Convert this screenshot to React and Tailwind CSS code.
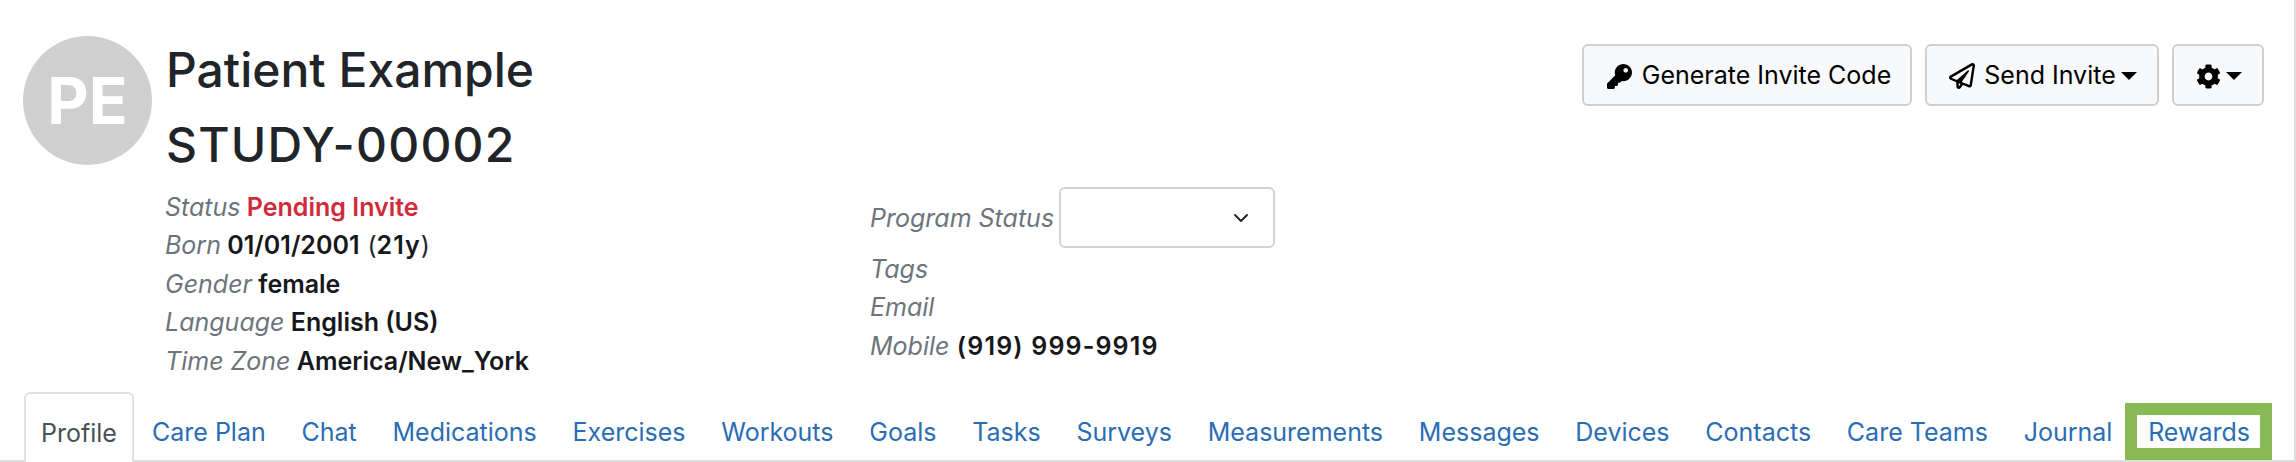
import React from 'react';
import { FaKey, FaRegPaperPlane, FaCog } from 'react-icons/fa';
import { ChevronDown } from 'lucide-react';

const TABS = ['Care Plan', 'Chat', 'Medications', 'Exercises', 'Workouts', 'Goals', 'Tasks', 'Surveys', 'Measurements', 'Messages', 'Devices', 'Contacts', 'Care Teams', 'Journal'];

const Caret = () => (
  <span className="ml-[5px] inline-block border-x-[8px] border-t-[8px] border-x-transparent border-t-black" />
);

const Field = ({ label, children }) => (
  <div className="flex h-[38.6px] items-center whitespace-pre">
    <i className="text-[#6c757d]">{label}</i>
    {children}
  </div>
);

const Value = ({ children }) => <b className="font-semibold text-[#16181b]"> {children}</b>;

const InviteButton = ({ children }) => (
  <button className="flex h-[62px] items-center rounded-[6px] border-2 border-[#cfcfcf] bg-[#f8f9fa] pt-[2px] text-black">
    {children}
  </button>
);

export default function App() {
  return (
    <div className="flex h-[462px] w-[2296px] flex-col overflow-hidden border-r-2 border-[#dedede] bg-white font-['Inter',sans-serif] text-[25px] text-[#212529]">
      {/* header */}
      <div className="flex justify-between pl-[23px] pr-[30px] pt-[36px]">
        <div className="flex">
          <div className="flex h-[129px] w-[129px] items-center justify-center rounded-full bg-[#d0d0d0] text-[64px] font-bold text-white">PE</div>
          <div className="ml-[14px] -mt-[4px] text-[48px] font-medium leading-[75px]">
            <div>Patient Example</div>
            <div className="tracking-[1.2px]">STUDY-00002</div>
          </div>
        </div>
        <div className="mt-[8px] flex gap-[13px] self-start">
          <InviteButton>
            <span className="flex w-[326px] items-center justify-center gap-[10px] pl-[4px]"><FaKey className="text-[25px]" /> Generate Invite Code</span>
          </InviteButton>
          <InviteButton>
            <span className="flex w-[230px] items-center justify-center gap-[9px] pl-[2px]">
              <FaRegPaperPlane className="text-[26px]" />
              <span className="flex items-center">Send Invite<Caret /></span>
            </span>
          </InviteButton>
          <InviteButton>
            <span className="ml-[2px] flex w-[86px] items-center justify-center"><FaCog className="text-[25px]" /><Caret /></span>
          </InviteButton>
        </div>
      </div>

      {/* patient details */}
      <div className="mt-[6px] flex pl-[165px]">
        <div className="w-[705px]">
          <Field label="Status"><b className="font-semibold text-[#d02b3a]"> Pending Invite</b></Field>
          <Field label="Born">
            <Value>01/01/2001</Value>
            <span className="ml-[8px]">(<b className="font-semibold tracking-[1px] text-[#16181b]">21y</b>)</span>
          </Field>
          <Field label="Gender"><Value>female</Value></Field>
          <Field label="Language"><Value>English (US)</Value></Field>
          <Field label="Time Zone"><Value>America/New_York</Value></Field>
        </div>
        <div className="-mt-[1px]">
          <div className="flex h-[61px] items-center">
            <i className="w-[189px] pt-[3px] text-[#6c757d]">Program Status</i>
            <div className="flex h-[61px] w-[216px] items-center justify-end rounded-[6px] border-2 border-[#ced4da] bg-white pr-[20px]">
              <ChevronDown size={24} strokeWidth={2} className="text-[#212529]" />
            </div>
          </div>
          <div className="mt-[2px]">
            <Field label="Tags" />
            <Field label="Email" />
            <Field label="Mobile"><b className="font-semibold tracking-[1.15px] text-[#16181b]"> (919) 999-9919</b></Field>
          </div>
        </div>
      </div>

      {/* tabs */}
      <div className="mt-auto flex h-[70px] border-b-2 border-[#dedede] pl-[24px]">
        <div className="-mb-[2px] flex h-[70px] w-[110px] items-center justify-center rounded-t-[6px] border-2 border-b-0 border-[#dee2e6] bg-white pt-[12px] text-[#495057]">Profile</div>
        <div className="ml-[18px] flex gap-[35.75px] pt-[14px] text-[#2a6db5]">
          {TABS.map(tab => (
            <a key={tab} className="flex items-center whitespace-nowrap">{tab}</a>
          ))}
          <a className="relative flex items-center whitespace-nowrap">
            Rewards
            <span className="absolute -left-[23px] -right-[22px] bottom-0 -top-[3px] border-[12px] border-[#88b955]" />
          </a>
        </div>
      </div>
    </div>
  );
}
